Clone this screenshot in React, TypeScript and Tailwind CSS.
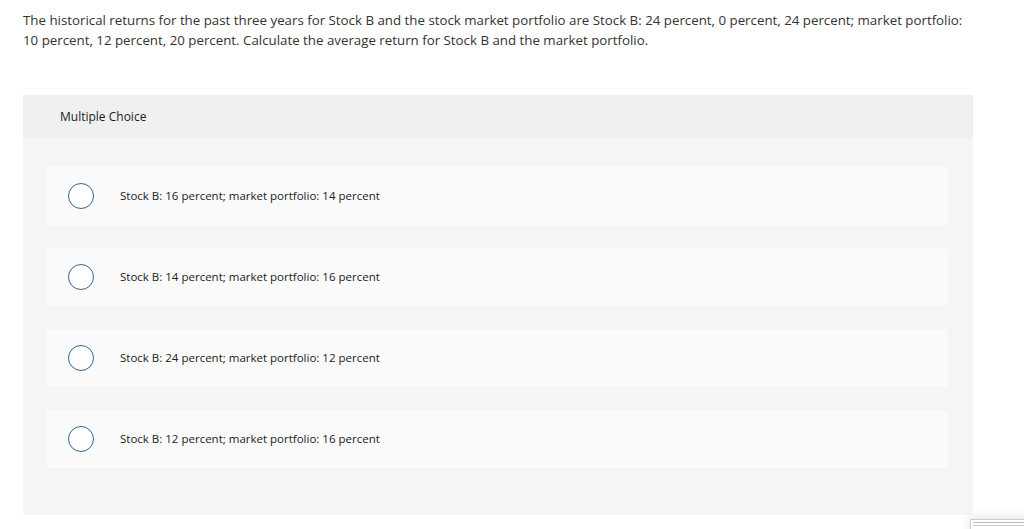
import React from "react";

const options = [
  "Stock B: 16 percent; market portfolio: 14 percent",
  "Stock B: 14 percent; market portfolio: 16 percent",
  "Stock B: 24 percent; market portfolio: 12 percent",
  "Stock B: 12 percent; market portfolio: 16 percent",
];

export default function App() {
  return (
    <div
      className="relative w-[1024px] h-[529px] bg-white overflow-hidden text-[#333]"
      style={{ fontFamily: '"Open Sans", "Liberation Sans", sans-serif' }}
    >
      <div className="pl-[23px] pr-[30px] pt-[10px] text-[13.3px] leading-[20px] text-[#333]">
        The historical returns for the past three years for Stock B and the stock market portfolio are Stock B: 24 percent, 0 percent, 24 percent; market portfolio:
        <br />
        10 percent, 12 percent, 20 percent. Calculate the average return for Stock B and the market portfolio.
      </div>
      <div className="ml-[23px] mt-[45px] w-[950px] h-[420px] bg-[#f5f5f5]">
        <div className="h-[44px] bg-[#f0f0f0] flex items-center pl-[37px] text-[12px] text-[#222]">
          Multiple Choice
        </div>
        <div className="flex flex-col gap-[23px] pt-[28px] pl-[23px] pr-[25px]">
          {options.map((o) => (
            <div key={o} className="h-[58px] bg-[#fafafa] rounded-[3px] flex items-center">
              <div className="ml-[22px] w-[26px] h-[26px] rounded-full border-[1.5px] border-[#2f6496] bg-white" />
              <div className="ml-[26px] text-[11.5px] text-[#222]">{o}</div>
            </div>
          ))}
        </div>
      </div>
      <div className="absolute left-[970px] top-[519px] w-[60px] h-[12px] bg-white border border-[#ccc] shadow-[0_0_12px_rgba(0,0,0,0.15)]">
        <div className="m-[2px] h-[1px] bg-[#bbb]" />
        <div className="mx-[2px] h-[1px] bg-[#ccc]" />
      </div>
    </div>
  );
}
